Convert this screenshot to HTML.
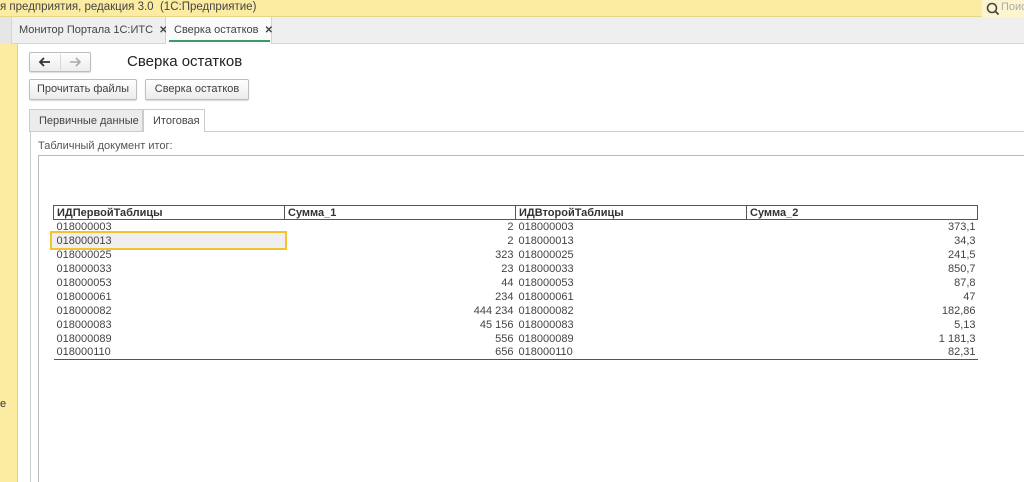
<!DOCTYPE html>
<html><head><meta charset="utf-8"><style>
*{margin:0;padding:0;box-sizing:border-box}
body{width:1024px;height:482px;overflow:hidden;background:#fff;font-family:"Liberation Sans",Arial,sans-serif;font-size:11px;color:#333;position:relative}
.a{position:absolute;white-space:nowrap}
.btn{position:absolute;white-space:nowrap;border:1px solid #bdbdbd;border-radius:2px;background:linear-gradient(#fff,#ececec);box-shadow:0 1px 1px rgba(0,0,0,.15);text-align:center;font-size:11.5px;color:#404040}
td{padding:0 2px 0 3px;height:14px;font-size:11px;color:#444;white-space:nowrap}
table{border-collapse:collapse;table-layout:fixed}
th{font-weight:bold;text-align:left;border:1px solid #555;padding:0 3px;height:14px;font-size:11px;color:#333;white-space:nowrap}
.r{text-align:right}
</style></head><body>
<div class="a" style="left:0;top:0;width:1024px;height:17px;background:#fbeca1;border-bottom:1px solid #e5d68a"></div>
<div class="a" style="left:0;top:1px;font-size:11.5px;color:#444">я предприятия, редакция 3.0&nbsp; (1С:Предприятие)</div>
<div class="a" style="left:982px;top:0;width:42px;height:17px;background:#fdf5cf"></div>
<svg class="a" style="left:986px;top:2px" width="14" height="14"><circle cx="6" cy="6" r="4.5" fill="none" stroke="#444" stroke-width="1.6"/><line x1="9.3" y1="9.3" x2="12.5" y2="12.5" stroke="#444" stroke-width="1.8"/></svg>
<div class="a" style="left:1001px;top:1px;font-size:11px;color:#aaa">Поис</div>
<div class="a" style="left:0;top:17px;width:1024px;height:27px;background:#efefef;border-bottom:1px solid #d4d4d4"></div>
<div class="a" style="left:0;top:17px;width:12px;height:27px;background:#e6e6e6;border-right:1px solid #d4d4d4"></div>
<div class="a" style="left:12px;top:17px;width:154px;height:27px;border-right:1px solid #d4d4d4;padding:7px 0 0 7px;font-size:11px;color:#444">Монитор Портала 1С:ИТС&nbsp; <b style="font-size:10px">✕</b></div>
<div class="a" style="left:166px;top:17px;width:106px;height:27px;background:#fafafa;border-right:1px solid #d4d4d4;padding:7px 0 0 8px;font-size:11px;color:#444">Сверка остатков&nbsp; <b style="font-size:10px">✕</b></div>
<div class="a" style="left:169px;top:40px;width:101px;height:2px;background:#3c9a6a"></div>
<div class="a" style="left:0;top:44px;width:18px;height:438px;background:#fbeca1;border-right:1px solid #e0cf80"></div>
<div class="a" style="left:0;top:398px;font-size:11px;color:#333">е</div>
<div class="btn" style="left:29px;top:52px;width:62px;height:20px"></div>
<div class="a" style="left:60px;top:54px;width:1px;height:16px;background:#d8d8d8"></div>
<svg class="a" style="left:38px;top:56px" width="14" height="12"><path d="M12 6H2M6 2L2 6L6 10" fill="none" stroke="#333" stroke-width="1.8"/></svg>
<svg class="a" style="left:68px;top:56px" width="14" height="12"><path d="M2 6H12M8 2L12 6L8 10" fill="none" stroke="#aaa" stroke-width="1.6"/></svg>
<div class="a" style="left:127px;top:53px;font-size:15px;color:#222">Сверка остатков</div>
<div class="btn" style="left:29px;top:79px;width:108px;height:21px;line-height:19px;font-size:11px">Прочитать файлы</div>
<div class="btn" style="left:145px;top:79px;width:104px;height:21px;line-height:19px;font-size:11px">Сверка остатков</div>
<div class="a" style="left:29px;top:109px;width:114px;height:23px;background:#ececec;border:1px solid #ccc;border-bottom:none;padding:5px 0 0 9px;font-size:11px;color:#444">Первичные данные</div>
<div class="a" style="left:30px;top:131px;width:994px;height:351px;border-left:1px solid #ccc;border-top:1px solid #ccc"></div>
<div class="a" style="left:143px;top:109px;width:62px;height:23px;background:#fff;border:1px solid #ccc;border-bottom:none;padding:5px 0 0 9px;font-size:11px;color:#444">Итоговая</div>
<div class="a" style="left:38px;top:140px;font-size:11px;color:#555">Табличный документ итог:</div>
<div class="a" style="left:38px;top:155px;width:986px;height:327px;border-left:1px solid #bbb;border-top:1px solid #bbb"></div>
<div class="a" style="left:50px;top:231px;width:237px;height:19px;background:#efefef;border:2px solid #f2c230"></div>
<table class="a" style="left:53px;top:205px;width:924px">
<colgroup><col style="width:231px"><col style="width:231px"><col style="width:231px"><col style="width:231px"></colgroup>
<tr><th>ИДПервойТаблицы</th><th>Сумма_1</th><th>ИДВторойТаблицы</th><th>Сумма_2</th></tr>
<tr><td>018000003</td><td class="r">2</td><td>018000003</td><td class="r">373,1</td></tr>
<tr><td>018000013</td><td class="r">2</td><td>018000013</td><td class="r">34,3</td></tr>
<tr><td>018000025</td><td class="r">323</td><td>018000025</td><td class="r">241,5</td></tr>
<tr><td>018000033</td><td class="r">23</td><td>018000033</td><td class="r">850,7</td></tr>
<tr><td>018000053</td><td class="r">44</td><td>018000053</td><td class="r">87,8</td></tr>
<tr><td>018000061</td><td class="r">234</td><td>018000061</td><td class="r">47</td></tr>
<tr><td>018000082</td><td class="r">444 234</td><td>018000082</td><td class="r">182,86</td></tr>
<tr><td>018000083</td><td class="r">45 156</td><td>018000083</td><td class="r">5,13</td></tr>
<tr><td>018000089</td><td class="r">556</td><td>018000089</td><td class="r">1 181,3</td></tr>
<tr style="border-bottom:1px solid #555"><td>018000110</td><td class="r">656</td><td>018000110</td><td class="r">82,31</td></tr>
</table>
</body></html>
